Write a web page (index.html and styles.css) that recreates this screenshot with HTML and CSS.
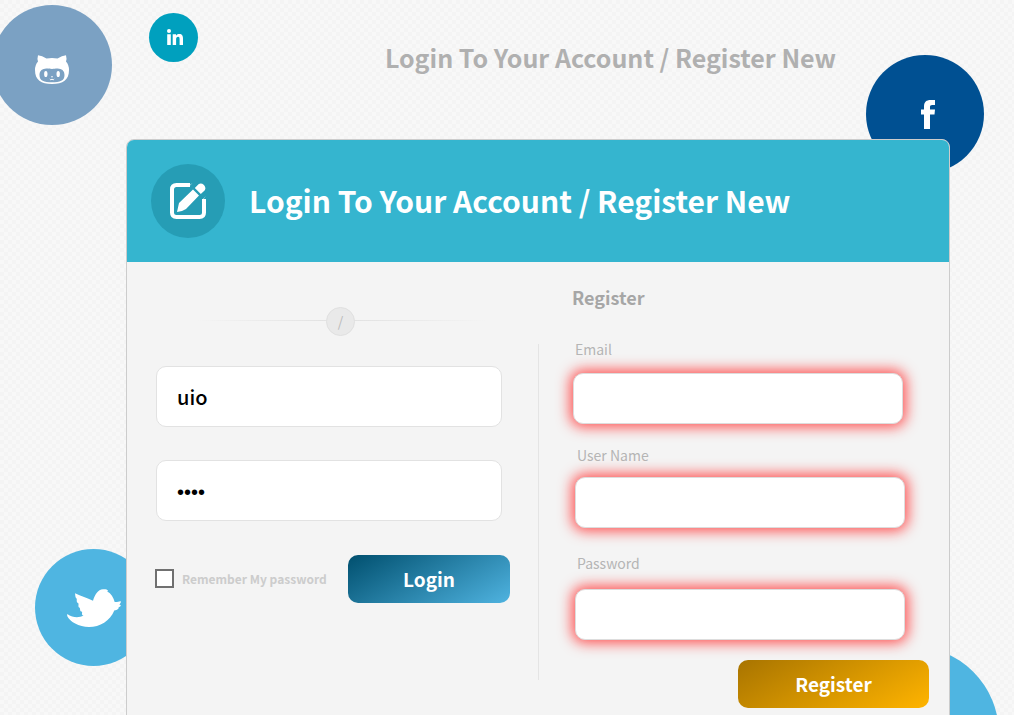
FILE: index.html
```html
<!DOCTYPE html>
<html lang="en">
<head>
<meta charset="utf-8">
<meta name="viewport" content="width=device-width, initial-scale=1">
<title>Login To Your Account / Register New</title>
<link rel="stylesheet" href="styles.css">
</head>
<body>
<div class="page">
  <a class="bubble bubble-github" href="#" aria-label="GitHub">
    <svg class="icon-github" viewBox="0 0 34 29" aria-hidden="true">
      <path fill="#fff" fill-rule="evenodd" d="M3 0.2Q2 3.8 3 6.6Q0 10 0 15C0 25 6 29 17 29S34 25 34 15Q34 10 31 6.6Q32 3.8 31 0.2Q27 .6 22.5 3.5Q17 2.6 11.5 3.5Q7 .6 3 .2ZM10 13.7C13 13.2 14 13.9 17 13.9S21 13.2 24 13.7C28 14 29.500 17 29.500 20C29.500 26 25 27.200 17 27.200S4.500 26 4.500 20C4.500 17 6 14 10 13.7Z"/>
      <ellipse fill="#fff" cx="10.800" cy="19" rx="1.700" ry="3.100"/>
      <ellipse fill="#fff" cx="23.200" cy="19" rx="1.700" ry="3.100"/>
      <circle fill="#fff" cx="17" cy="21.700" r=".8"/>
      <path fill="none" stroke="#fff" d="M14.800 24Q15.600 25.500 17 24.200Q18.400 25.500 19.200 24"/>
    </svg>
  </a>
  <a class="bubble bubble-linkedin" href="#" aria-label="LinkedIn">
    <svg class="icon-linkedin" viewBox="0 0 16 16" aria-hidden="true">
      <circle fill="#fff" cx="2" cy="2" r="2"/>
      <path fill="#fff" d="M.2 5.200H3.800V16H.2ZM5.700 5.200H9V6.700C10 5.300 11.200 5 12.300 5C15.200 5 16 6.800 16 9.500V16H12.600V10.200C12.600 8.600 12.200 7.800 11.100 7.800C9.700 7.800 9.100 8.800 9.100 10.300V16H5.700Z"/>
    </svg>
  </a>
  <a class="bubble bubble-facebook" href="#" aria-label="Facebook">
    <svg class="icon-facebook" viewBox="0 0 14 29" aria-hidden="true">
      <path fill="#fff" d="M3 29V14.500H0V9.500H3V6.500C3 2 5.500 0 9.500 0H14V5H11.200C9.500 5 9 5.700 9 7V9.500H14L13.500 14.500H9V29Z"/>
    </svg>
  </a>
  <a class="bubble bubble-twitter" href="#" aria-label="Twitter">
    <svg class="icon-twitter" viewBox="0 0 54 38" aria-hidden="true">
      <path fill="#fff" d="M.2 25C6 29 12 29 16.500 26.600C14 26 15.500 24.500 15 22.700C12.500 22.500 13.500 20.500 12.700 18.800C10.500 18 12 16 11.300 14.300C9 13 10 11.500 9.700 9.800C7.800 8 8.500 6 8 4.200C14 7 20 9 26 11.800C27.500 6 31 .5 36 .2C39 0 40 .7 41 1.200L40.300 2.500C44 4.500 46.500 8.500 47.700 13C50 13.500 52 12 53.800 12.300C54 14 53 14.500 52.300 15.500C55 16 53.500 18 51.500 18.500C52 20.500 49 20.800 47.300 21.500C43 32 33 38 22 38C12 38 2.500 32.500 .2 27Z"/>
    </svg>
  </a>
  <span class="bubble bubble-corner"></span>

  <h1 class="page-title">Login To Your Account / Register New</h1>

  <main class="card">
    <header class="card-header">
      <span class="badge">
        <svg class="icon-edit" viewBox="0 0 36 36" aria-hidden="true">
          <path fill="none" stroke="#fff" stroke-width="4" d="M20 2H6.500Q2 2 2 6.500V29.500Q2 34 6.500 34H29.500Q34 34 34 29.500V16"/>
          <path fill="#fff" d="M22.500 0L18.500 4H17ZM36 13L32 17V18ZM7 29L9 20L23 6.500L29 12.500L16 26L12 28ZM24.800 5L28.500 1.300Q31-.5 34 2Q36.500 5 34.600 7.400L30.800 11Z"/>
        </svg>
      </span>
      <h2 class="card-title">Login To Your Account / Register New</h2>
    </header>
    <div class="card-body">
      <form class="login">
        <div class="separator"><span class="separator-mark">/</span></div>
        <input class="login-input" type="text" value="uio" aria-label="User name">
        <input class="login-input login-password" type="password" value="abcd" aria-label="Password">
        <div class="login-actions">
          <label class="remember"><input class="remember-box" type="checkbox">Remember My password</label>
          <button class="button button-login" type="button">Login</button>
        </div>
      </form>
      <form class="register">
        <h3 class="register-title">Register</h3>
        <div class="field field-email">
          <label class="field-label" for="email">Email</label>
          <input class="field-input" id="email" type="email">
        </div>
        <div class="field field-username">
          <label class="field-label" for="username">User Name</label>
          <input class="field-input" id="username" type="text">
        </div>
        <div class="field field-password">
          <label class="field-label" for="new-password">Password</label>
          <input class="field-input" id="new-password" type="password">
        </div>
        <button class="button button-register" type="button">Register</button>
      </form>
    </div>
  </main>
</div>
</body>
</html>
```
FILE: styles.css
```css
* {
  box-sizing: border-box;
}

body {
  margin: 0;
  font-family: "Noto Sans CJK SC", "Open Sans", sans-serif;
  background: repeating-conic-gradient(#f8f8f8 0 25%, #f4f4f4 0 50%) 0 0 / 8px 8px;
}

.page {
  position: relative;
  overflow: hidden;
  height: 100vh;
  padding: 35px 64px 0 126px;
}

.bubble {
  position: absolute;
  display: flex;
  align-items: center;
  justify-content: center;
  border-radius: 50%;
}

.bubble-github {
  left: -8px;
  top: 5px;
  width: 120px;
  height: 120px;
  padding-top: 8px;
  background: #7ba1c3;
}

.bubble-linkedin {
  left: 149px;
  top: 13px;
  width: 49px;
  height: 49px;
  padding: 0 0 1px 2px;
  background: #00a0be;
}

.bubble-facebook {
  right: 30px;
  top: 55px;
  width: 118px;
  height: 118px;
  padding-left: 6px;
  background: #005092;
}

.bubble-twitter {
  left: 35px;
  top: 549px;
  width: 117px;
  height: 117px;
  background: #4fb5e1;
}

.bubble-corner {
  right: 15px;
  top: 646px;
  width: 176px;
  height: 176px;
  background: #4fb5e1;
}

.icon-github {
  width: 34px;
  height: 29px;
}

.icon-linkedin {
  width: 16px;
  height: 16px;
}

.icon-facebook {
  width: 14px;
  height: 29px;
}

.icon-twitter {
  width: 54px;
  height: 38px;
}

.icon-edit {
  width: 36px;
  height: 36px;
}

.page-title {
  margin: 0 0 60px;
  padding-left: 145px;
  text-align: center;
  font-size: 25px;
  line-height: 44px;
  font-weight: 700;
  color: #b0b0b0;
}

.card {
  position: relative;
  overflow: hidden;
  min-height: 640px;
  border: 1px solid #ccc;
  border-radius: 8px;
  background: #f4f4f4;
}

.card-header {
  display: flex;
  align-items: center;
  gap: 24px;
  height: 122px;
  padding: 0 24px;
  background: #35b5cf;
}

.badge {
  display: flex;
  align-items: center;
  justify-content: center;
  width: 74px;
  height: 74px;
  border-radius: 50%;
  background: #269db5;
}

.card-title {
  margin: 0;
  padding-bottom: 2px;
  font-size: 30px;
  line-height: 48px;
  font-weight: 700;
  color: #fff;
}

.card-body {
  display: grid;
  grid-template-columns: 1fr 1fr;
  background: linear-gradient(#e4e4e4, #e4e4e4) center 82px / 1px 336px no-repeat;
}

.login {
  display: flex;
  flex-direction: column;
  padding: 45px 28px 0;
}

.separator {
  display: flex;
  justify-content: center;
  margin: 0 0 30px 16px;
  background: linear-gradient(90deg, transparent, #e0e0e0 50%, transparent) center 13px / 290px 1px no-repeat;
}

.separator-mark {
  width: 29px;
  height: 29px;
  border: 1px solid #e0e0e0;
  border-radius: 50%;
  background: #e9e9e9;
  text-align: center;
  font-size: 14px;
  line-height: 26px;
  color: #bbb;
}

.login-input {
  height: 61px;
  margin: 0 8px 33px 1px;
  padding: 0 20px;
  border: 1px solid #e2e2e2;
  border-radius: 10px;
  background: #fff;
  font-family: inherit;
  font-size: 20px;
  font-weight: 500;
  color: #000;
}

.login-password {
  padding-top: 4px;
  font-family: "Liberation Sans", Arial, sans-serif;
}

.login-actions {
  display: flex;
  align-items: center;
  justify-content: space-between;
  padding-top: 1px;
}

.remember {
  display: flex;
  align-items: center;
  gap: 8px;
  padding-bottom: 2px;
  white-space: nowrap;
  font-size: 12px;
  font-weight: 700;
  color: #ccc;
}

.remember-box {
  appearance: none;
  width: 19px;
  height: 19px;
  margin: 0;
  border: 2px solid #707070;
  background: #fff;
}

.remember-box:checked {
  background: #4fb5e1;
}

.button {
  height: 48px;
  padding: 0 0 2px;
  border: 0;
  border-radius: 10px;
  font-family: inherit;
  font-size: 19px;
  font-weight: 700;
  color: #fff;
}

.button-login {
  width: 162px;
  background: linear-gradient(150deg, #004f6e, #4fb3e0);
}

.button-register {
  align-self: flex-end;
  width: 191px;
  background: linear-gradient(150deg, #a87400, #ffb400);
}

.register {
  display: flex;
  flex-direction: column;
  padding: 21px 20px 0 34px;
}

.register-title {
  margin: 0 0 24px;
  font-size: 18px;
  line-height: 28px;
  font-weight: 700;
  color: #a6a6a6;
}

.field {
  display: flex;
  flex-direction: column;
  gap: 10px;
  margin: 0 24px 20px 3px;
}

.field-email {
  margin: 0 26px 17px 1px;
}

.field-username {
  gap: 8px;
  margin-bottom: 21px;
}

.field-password {
  gap: 12px;
}

.field-label {
  padding-left: 2px;
  font-size: 14px;
  line-height: 28px;
  color: #b5b5b5;
}

.field-input {
  height: 51px;
  padding: 0 16px;
  border: 1px solid #ddd;
  border-radius: 10px;
  background: #fff;
  box-shadow: 0 0 14px 3px #ff5050;
  font-family: inherit;
  font-size: 18px;
}
```
